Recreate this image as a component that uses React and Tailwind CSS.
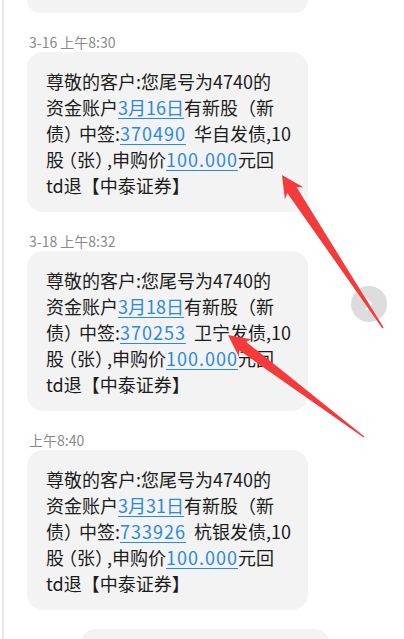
const font = { fontFamily: '"Noto Sans CJK SC", "Noto Sans", sans-serif' };

const messages = [
  { time: '3-16 上午8:30', date: '3月16日', code: '370490', name: '华自发债' },
  { time: '3-18 上午8:32', date: '3月18日', code: '370253', name: '卫宁发债' },
  { time: '上午8:40', date: '3月31日', code: '733926', name: '杭银发债' },
];

function Link({ children, wide }) {
  return (
    <span
      className={
        wide
          ? 'text-[#2a8ae0] underline decoration-[#2a8ae0] underline-offset-[3px] decoration-1 tracking-[1px]'
          : 'text-[#2a8ae0] underline decoration-[#2a8ae0] underline-offset-[3px] decoration-1'
      }
    >
      {children}
    </span>
  );
}

function Bubble({ m }) {
  return (
    <div>
      <div className="ml-[29px] mt-[19px] h-[20px] text-[14px] leading-[20px] text-[#8a8a8a]">{m.time}</div>
      <div className="ml-[27px] w-[281px] rounded-[16px] bg-[#f3f3f3] pl-[19px] pt-4 pb-[14px] text-[18px] leading-[26px] text-[#1c1c1c] whitespace-nowrap">
        <div>尊敬的客户:您尾号为4740的</div>
        <div>资金账户<Link>{m.date}</Link>有新股（新</div>
        <div>
          债<span className="tracking-[-3px]">）</span>中签:<Link wide>{m.code}</Link>
          <span className="ml-[8px]">{m.name},10</span>
        </div>
        <div>
          <span className="tracking-[-5px]">股</span>（张<span className="tracking-[-6px]">）</span>,申购价<Link wide>100.000</Link>元回
        </div>
        <div>td退【中泰证券】</div>
      </div>
    </div>
  );
}

// tapered hand-drawn style arrow, tip -> tail
function arrowPoints(tx, ty, ex, ey) {
  const dx = ex - tx, dy = ey - ty;
  const len = Math.hypot(dx, dy);
  const ux = dx / len, uy = dy / len;
  const nx = -uy, ny = ux;
  const p = (a, b) => `${(tx + a * ux + b * nx).toFixed(1)},${(ty + a * uy + b * ny).toFixed(1)}`;
  return [
    p(0, 0),
    p(22, 11),
    p(18, 5.5),
    `${(ex + 0.7 * nx).toFixed(1)},${(ey + 0.7 * ny).toFixed(1)}`,
    `${(ex - 0.7 * nx).toFixed(1)},${(ey - 0.7 * ny).toFixed(1)}`,
    p(18, -5.5),
    p(22, -11),
  ].join(' ');
}

export default function App() {
  return (
    <div className="relative h-[639px] w-[404px] overflow-hidden bg-white" style={font}>
      <div className="absolute left-[2px] top-0 h-full w-[1.5px] bg-[#e6e6e6]" />

      <div className="ml-[27px] h-[13px] w-[281px] rounded-b-[16px] bg-[#f3f3f3]" />
      {messages.map(m => (
        <Bubble key={m.code} m={m} />
      ))}
      <div className="ml-[80px] mt-[19px] h-[30px] w-[250px] rounded-t-[16px] bg-[#f3f3f3]" />

      {/* side chevron button */}
      <div className="absolute left-[351px] top-[286px] flex h-[36px] w-[36px] items-center justify-center rounded-full bg-[#dcdcdc]">
        <svg width="10" height="14" viewBox="0 0 10 14" fill="none">
          <path d="M2.5 1.5 L7.5 7 L2.5 12.5" stroke="#fff" strokeWidth="1.4" strokeLinecap="round" strokeLinejoin="round" />
        </svg>
      </div>

      {/* annotation arrows */}
      <svg className="absolute left-0 top-0" width="404" height="639" viewBox="0 0 404 639">
        <polygon points={arrowPoints(282, 175, 383, 328)} fill="#f43a3a" />
        <polygon points={arrowPoints(228, 335, 364, 437)} fill="#f43a3a" />
      </svg>
    </div>
  );
}
